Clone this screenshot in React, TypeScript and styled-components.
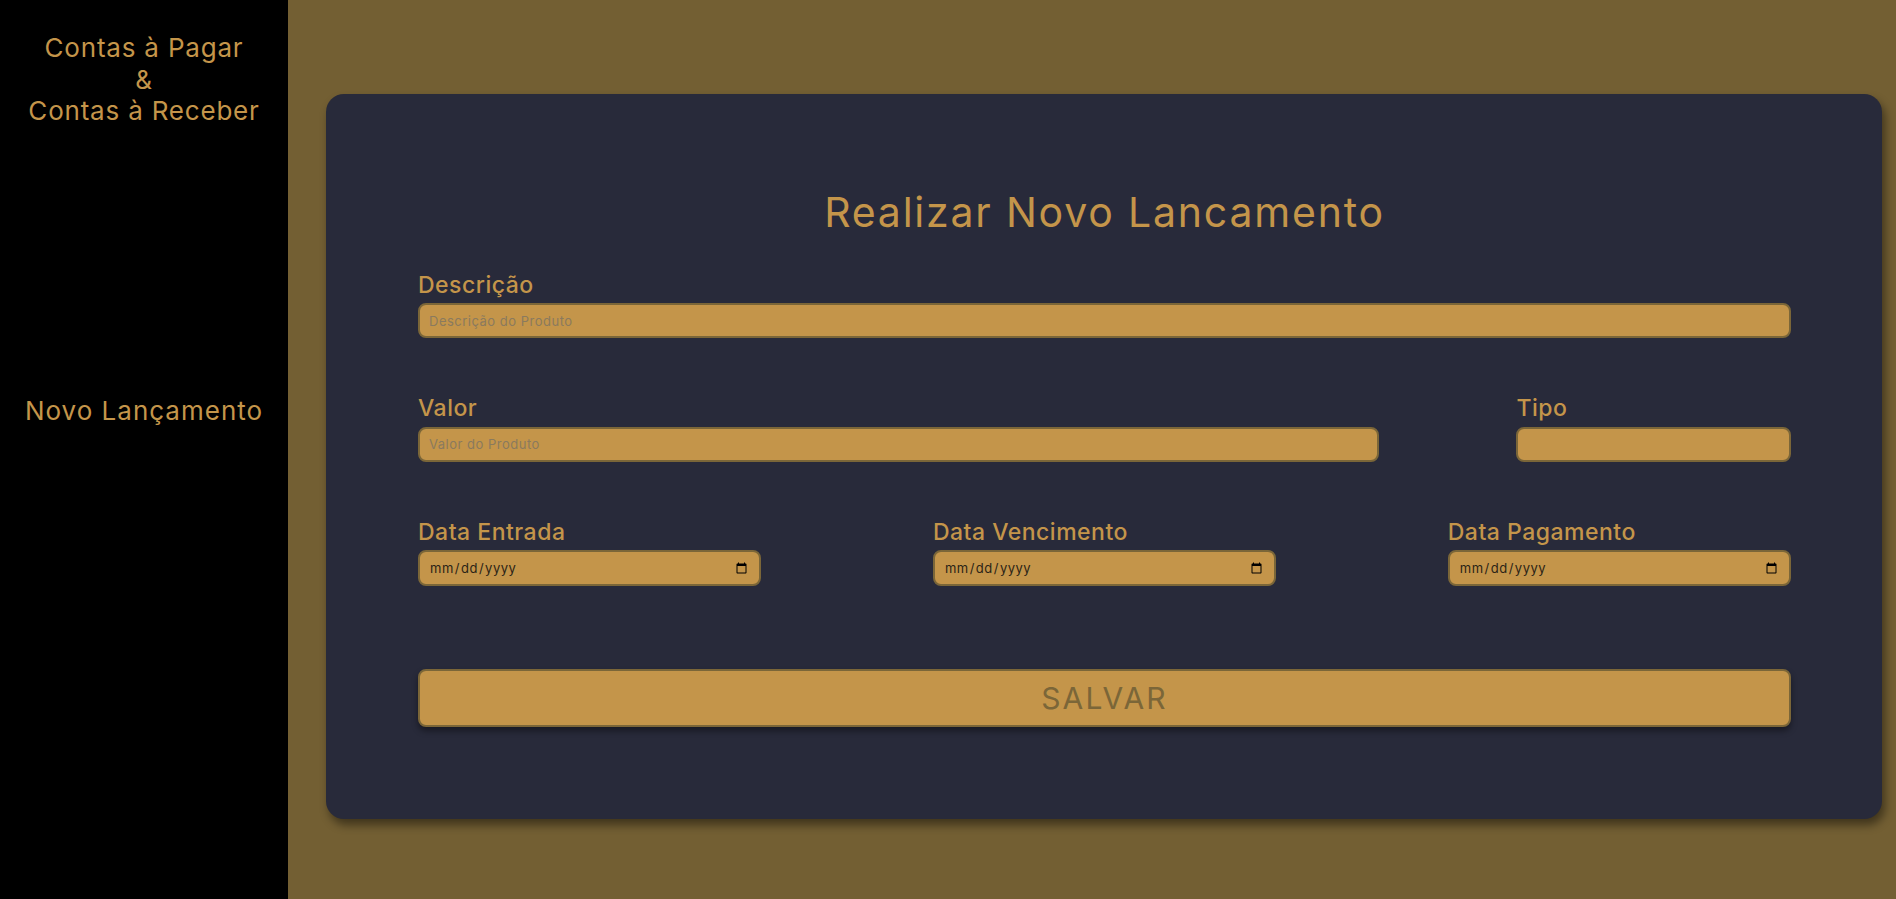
import React from "react";
import styled, { createGlobalStyle } from "styled-components";

const GlobalStyle = createGlobalStyle`
  html, body {
    margin: 0;
    padding: 0;
    background: #735f33;
    font-family: Inter, "Open Sans", sans-serif;
  }
  * { box-sizing: border-box; }
`;

const Page = styled.div`
  display: flex;
  min-height: 899px;
  background: #735f33;
`;

const Sidebar = styled.nav`
  width: 288px;
  flex-shrink: 0;
  background: #000;
  display: flex;
  flex-direction: column;
  align-items: center;
  padding-top: 32px;
  color: #c4954a;
  text-align: center;
`;

const Brand = styled.div`
  font-size: 26px;
  line-height: 31.5px;
  letter-spacing: 0.8px;
`;

const NavLink = styled.a`
  margin-top: 268px;
  font-size: 26px;
  line-height: 31.5px;
  letter-spacing: 1px;
  color: #c4954a;
  text-decoration: none;
  cursor: pointer;
`;

const Main = styled.main`
  flex: 1;
  padding: 94px 14px 80px 38px;
`;

const Card = styled.section`
  background: #282a3a;
  border-radius: 18px;
  box-shadow: 3px 6px 10px rgba(0, 0, 0, 0.45);
  padding: 93px 91px 92px 92px;
`;

const Title = styled.h1`
  margin: 0 0 34.5px;
  text-align: center;
  font-weight: 400;
  font-size: 41px;
  line-height: 50px;
  letter-spacing: 1.8px;
  color: #c4954a;
`;

const Form = styled.form`
  display: flex;
  flex-direction: column;
  gap: 57px;
`;

const Row = styled.div`
  display: flex;
  justify-content: space-between;
`;

const Field = styled.div<{ $width: string }>`
  display: flex;
  flex-direction: column;
  width: ${(p) => p.$width};
`;

const Label = styled.label`
  font-size: 23px;
  font-weight: 500;
  line-height: 27px;
  letter-spacing: 0.5px;
  margin-bottom: 4.5px;
  color: #c4954a;
`;

const Input = styled.input<{ $tall?: boolean }>`
  height: ${(p) => (p.$tall ? "36px" : "35px")};
  width: 100%;
  background: #c4954a;
  border: 2px solid #7b6638;
  border-radius: 8px;
  padding: 0 9px;
  font-family: Inter, "Open Sans", sans-serif;
  font-size: 13px;
  letter-spacing: 0.5px;
  color: #2b2417;
  color-scheme: light;
  outline: none;
  &::placeholder {
    color: #8a7a5e;
  }
`;

const SaveButton = styled.button`
  margin-top: 26px;
  height: 58px;
  width: 100%;
  background: #c4954a;
  border: 2px solid #7b6638;
  border-radius: 8px;
  box-shadow: 0 4px 6px rgba(0, 0, 0, 0.4);
  font-family: Inter, "Open Sans", sans-serif;
  font-size: 30px;
  letter-spacing: 2.2px;
  color: #7b6638;
  cursor: pointer;
`;

export default function App() {
  return (
    <>
      <GlobalStyle />
      <Page>
        <Sidebar>
          <Brand>
            Contas à Pagar
            <br />&amp;
            <br />
            Contas à Receber
          </Brand>
          <NavLink>Novo Lançamento</NavLink>
        </Sidebar>
        <Main>
          <Card>
            <Title>Realizar Novo Lancamento</Title>
            <Form onSubmit={(e) => e.preventDefault()}>
              <Row>
                <Field $width="100%">
                  <Label htmlFor="descricao">Descrição</Label>
                  <Input id="descricao" type="text" placeholder="Descrição do Produto" />
                </Field>
              </Row>
              <Row>
                <Field $width="70%">
                  <Label htmlFor="valor">Valor</Label>
                  <Input id="valor" type="text" placeholder="Valor do Produto" />
                </Field>
                <Field $width="20%">
                  <Label htmlFor="tipo">Tipo</Label>
                  <Input id="tipo" type="text" />
                </Field>
              </Row>
              <Row>
                <Field $width="25%">
                  <Label htmlFor="entrada">Data Entrada</Label>
                  <Input id="entrada" type="date" $tall />
                </Field>
                <Field $width="25%">
                  <Label htmlFor="vencimento">Data Vencimento</Label>
                  <Input id="vencimento" type="date" $tall />
                </Field>
                <Field $width="25%">
                  <Label htmlFor="pagamento">Data Pagamento</Label>
                  <Input id="pagamento" type="date" $tall />
                </Field>
              </Row>
              <SaveButton type="submit">SALVAR</SaveButton>
            </Form>
          </Card>
        </Main>
      </Page>
    </>
  );
}
